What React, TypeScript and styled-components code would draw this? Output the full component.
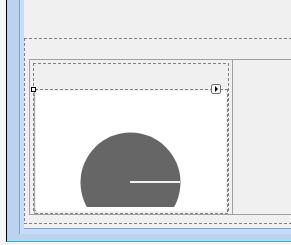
import React from "react";
import styled, { createGlobalStyle, css } from "styled-components";

const Global = createGlobalStyle`
  html, body { margin: 0; padding: 0; background: #f6f6f6; }
  body { font-family: "Liberation Sans", Arial, sans-serif; }
  * { box-sizing: border-box; }
`;

const DASH = "#808080";
const hDash = `repeating-linear-gradient(90deg, ${DASH} 0 3px, transparent 3px 5px)`;
const vDash = `repeating-linear-gradient(180deg, ${DASH} 0 3px, transparent 3px 5px)`;

/* dashed edges drawn as 1px background strips, 3px on / 2px off */
const dashedEdges = (top: boolean, right: boolean, bottom: boolean, left: boolean) => css`
  background-image: ${[
    top ? hDash : null,
    bottom ? hDash : null,
    left ? vDash : null,
    right ? vDash : null,
  ]
    .filter(Boolean)
    .join(", ")};
  background-position: ${[
    top ? "left top" : null,
    bottom ? "left bottom" : null,
    left ? "left top" : null,
    right ? "right top" : null,
  ]
    .filter(Boolean)
    .join(", ")};
  background-size: ${[
    top ? "100% 1px" : null,
    bottom ? "100% 1px" : null,
    left ? "1px 100%" : null,
    right ? "1px 100%" : null,
  ]
    .filter(Boolean)
    .join(", ")};
  background-repeat: no-repeat;
`;

const Page = styled.div`
  width: 291px;
  height: 245px;
  overflow: hidden;
  padding-left: 6px;
`;

const Window = styled.div`
  height: 242px;
  display: flex;
  background: #bcd3ee;
  border-left: 1px solid #000;
  border-bottom: 1px solid #2bb3d6;
  padding-left: 12px;
  padding-bottom: 7px;
`;

const FrameInner = styled.div`
  flex: 1;
  display: flex;
  min-width: 0;
  background: #c6dcf9;
  border-left: 1px solid #7fa0d6;
  padding-left: 4px;
  padding-bottom: 5px;
`;

const Content = styled.div`
  flex: 1;
  min-width: 0;
  overflow: hidden;
  background: #f0f0f0;
  border-bottom: 1px solid #7fa0d6;
  padding-top: 38px;
`;

const OuterDashed = styled.div`
  width: 300px;
  height: 186px;
  ${dashedEdges(true, true, true, true)}
  padding: 21px 0 0 5px;
`;

const SplitBox = styled.div`
  height: 156px;
  display: flex;
  border: 1px solid #a0a0a0;
`;

const LeftPanel = styled.div`
  width: 203px;
  flex: none;
  padding: 3px;
  border-right: 1px solid #a0a0a0;
  display: flex;
`;

const RightPanel = styled.div`
  flex: 1;
  background: #f0f0f0;
`;

const RectA = styled.div`
  flex: 1;
  display: flex;
  flex-direction: column;
  ${dashedEdges(true, true, true, true)}
  padding: 26px 1px 1px 1px;
`;

const RectB = styled.div`
  flex: 1;
  position: relative;
  display: flex;
  flex-direction: column;
  ${dashedEdges(true, true, true, false)}
  border-left: 1px solid #a8a8a8;
  padding: 2px 2px 3px 1px;
`;

const WhiteArea = styled.div`
  flex: 1;
  background: #fff;
  overflow: hidden;
`;

const CornerHandle = styled.div`
  position: absolute;
  left: -4px;
  top: -2px;
  width: 5px;
  height: 5px;
  border: 1px solid #000;
  background: #fff;
`;

const TaskHandle = styled.div`
  position: absolute;
  left: 176px;
  top: -5px;
  width: 10px;
  height: 10px;
  border: 1px solid #6f6f6f;
  border-radius: 2px;
  background: #f4f4f4;
  display: flex;
  align-items: center;
  padding-left: 3px;
`;

const Arrow = styled.div`
  width: 0;
  height: 0;
  border-top: 3px solid transparent;
  border-bottom: 3px solid transparent;
  border-left: 3px solid #000;
`;

export default function App() {
  return (
    <>
      <Global />
      <Page>
        <Window>
          <FrameInner>
            <Content>
              <OuterDashed>
                <SplitBox>
                  <LeftPanel>
                    <RectA>
                      <RectB>
                        <CornerHandle />
                        <TaskHandle>
                          <Arrow />
                        </TaskHandle>
                        <WhiteArea>
                          <svg width="190" height="116" viewBox="0 0 190 116">
                            <circle cx="94.5" cy="91.5" r="50" fill="#666666" />
                            <line x1="94" y1="91" x2="144" y2="91" stroke="#f2f2f2" strokeWidth="2" />
                          </svg>
                        </WhiteArea>
                      </RectB>
                    </RectA>
                  </LeftPanel>
                  <RightPanel />
                </SplitBox>
              </OuterDashed>
            </Content>
          </FrameInner>
        </Window>
      </Page>
    </>
  );
}
